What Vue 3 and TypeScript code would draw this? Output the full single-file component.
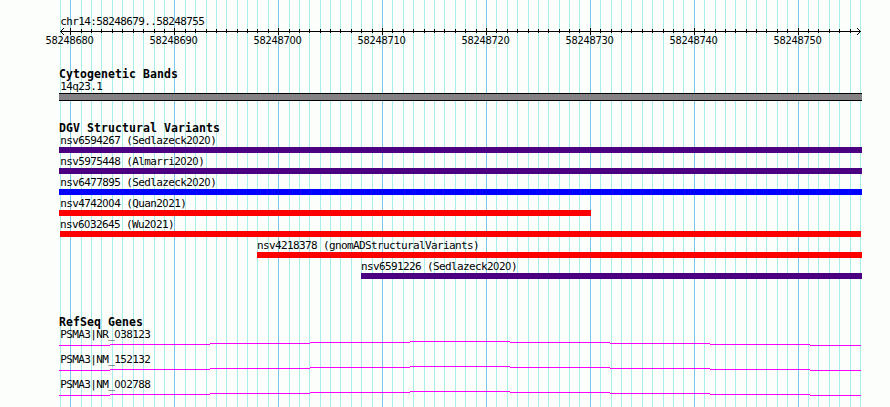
<script setup lang="ts">
import { computed, defineComponent, h } from 'vue'

interface Variant {
  name: string
  source: string
  start: number
  end: number
  kind: 'inversion' | 'complex' | 'loss'
}

const LEFT = 59

const PlainText = defineComponent({
  props: { text: { type: String, required: true } },
  setup(props) {
    return () =>
      h(
        'span',
        props.text
          .split(/(0+)/)
          .filter((p) => p)
          .map((p) => (p[0] === '0' ? h('span', { class: 'zero' }, p) : p)),
      )
  },
})

const decades: { x: number; minor: number[] }[] = [
  { x: 70, minor: [11, 21, 31, 42, 52, 63, 73, 84, 94] },
  { x: 174, minor: [11, 21, 32, 42, 52, 63, 73, 83, 94] },
  { x: 278, minor: [11, 21, 31, 42, 52, 62, 73, 83, 94] },
  { x: 382, minor: [10, 21, 31, 42, 52, 62, 73, 83, 94] },
  { x: 486, minor: [10, 21, 31, 42, 52, 62, 73, 83, 93] },
  { x: 590, minor: [10, 21, 31, 41, 52, 62, 73, 83, 93] },
  { x: 694, minor: [10, 21, 31, 41, 52, 62, 72, 83, 93] },
  { x: 798, minor: [10, 20, 31, 41, 52, 62] },
]

const majors = decades.map((d) => d.x)
const minors = computed(() => [60, ...decades.flatMap((d) => d.minor.map((m) => d.x + m))])
const ticks = computed(() => minors.value.filter((x) => x > 60 && x < 860))
const labels = decades.map((_, i) => String(58248680 + i * 10))

const variants: Variant[] = [
  { name: 'nsv6594267', source: 'Sedlazeck2020', start: 59, end: 862, kind: 'inversion' },
  { name: 'nsv5975448', source: 'Almarri2020', start: 59, end: 862, kind: 'inversion' },
  { name: 'nsv6477895', source: 'Sedlazeck2020', start: 59, end: 862, kind: 'complex' },
  { name: 'nsv4742004', source: 'Quan2021', start: 59, end: 591, kind: 'loss' },
  { name: 'nsv6032645', source: 'Wu2021', start: 60, end: 861, kind: 'loss' },
  { name: 'nsv4218378', source: 'gnomADStructuralVariants', start: 257, end: 862, kind: 'loss' },
  { name: 'nsv6591226', source: 'Sedlazeck2020', start: 361, end: 862, kind: 'inversion' },
]

const genes = ['PSMA3|NR_038123', 'PSMA3|NM_152132', 'PSMA3|NM_002788']

const intron = [
  [59, 110, 4],
  [110, 210, 3],
  [210, 310, 2],
  [310, 410, 1],
  [410, 510, 0],
  [510, 610, 1],
  [610, 710, 2],
  [710, 810, 3],
  [810, 861, 4],
]
</script>

<template>
  <main class="browser">
    <svg class="grid" width="890" height="407" shape-rendering="crispEdges" aria-hidden="true">
      <rect v-for="x in minors" :key="x" class="minor" :x="x" y="0" width="1" height="407" />
      <rect v-for="x in majors" :key="x" class="major" :x="x" y="0" width="1" height="407" />
    </svg>

    <header class="scale">
      <div class="caption region"><PlainText text="chr14:58248679..58248755" /></div>
      <svg class="ruler" width="890" height="7" shape-rendering="crispEdges">
        <rect x="60" y="3" width="801" height="1" />
        <rect v-for="x in ticks" :key="x" :x="x" y="1" width="1" height="4" />
        <rect v-for="x in majors" :key="x" :x="x" y="0" width="1" height="7" />
        <path d="M61 2h1v3h-1zM62 1h1v1h-1zM62 5h1v1h-1zM63 0h1v1h-1zM63 6h1v1h-1z" />
        <path d="M859 2h1v3h-1zM858 1h1v1h-1zM858 5h1v1h-1zM857 0h1v1h-1zM857 6h1v1h-1z" />
      </svg>
      <div class="coordinates">
        <span v-for="label in labels" :key="label" class="coordinate"><PlainText :text="label" /></span>
      </div>
    </header>

    <section class="track">
      <h2>Cytogenetic Bands</h2>
      <div class="caption"><PlainText text="14q23.1" /></div>
      <div class="band"></div>
    </section>

    <section class="track">
      <h2>DGV Structural Variants</h2>
      <div class="variants">
        <div
          v-for="v in variants"
          :key="v.name"
          class="variant"
          :style="{ marginLeft: v.start - LEFT + 'px', width: v.end - v.start + 'px' }"
        >
          <div class="caption" :class="{ flush: v.start > 59 }">
            <PlainText :text="`${v.name} (${v.source})`" />
          </div>
          <div class="bar" :class="v.kind"></div>
        </div>
      </div>
    </section>

    <section class="track genes-track">
      <h2>RefSeq Genes</h2>
      <div class="genes">
        <div v-for="g in genes" :key="g">
          <div class="caption"><PlainText :text="g" /></div>
          <svg class="intron" width="803" height="5" viewBox="59 0 803 5" shape-rendering="crispEdges">
            <rect v-for="s in intron" :key="s[0]" :x="s[0]" :y="s[2]" :width="s[1] - s[0]" height="1" />
          </svg>
        </div>
      </div>
    </section>
  </main>
</template>

<style>
body {
  margin: 0;
  background: #fcfefc;
}
</style>

<style scoped>
.browser {
  position: relative;
  width: 890px;
  height: 407px;
  box-sizing: border-box;
  padding-top: 15px;
  overflow: hidden;
  color: #000;
  background: #fcfefc;
  font: 11px/13px 'DejaVu Sans Mono', monospace;
  letter-spacing: -0.622px;
}
.grid {
  position: absolute;
  inset: 0;
}
.minor {
  fill: #a8ecec;
}
.major {
  fill: #7cc8ec;
}
.scale,
.track {
  position: relative;
}
.caption {
  height: 13px;
  padding-left: 1.3px;
  white-space: pre;
}
.caption.flush {
  padding-left: 0;
}
.region {
  margin-left: 59px;
}
.caption :deep(.zero),
.coordinate {
  font-family: 'DejaVu Sans Condensed', 'DejaVu Sans', sans-serif;
  font-stretch: condensed;
  letter-spacing: -0.298px;
}
.ruler {
  display: block;
}
.coordinates {
  display: flex;
  height: 13px;
  margin: -1px 0 0 17.5px;
}
.coordinate {
  width: 104px;
  text-align: center;
}
.track {
  width: 803px;
  margin: 21px 0 0 59px;
}
.genes-track {
  margin-top: 37px;
}
h2 {
  height: 12px;
  margin: 0;
  font-size: 11.5px;
  line-height: 13px;
  font-weight: 700;
  letter-spacing: 0.077px;
}
.band {
  height: 6px;
  border: solid #000;
  border-width: 1px 0;
  background: #848284;
}
.variants {
  display: flex;
  flex-direction: column;
  gap: 2px;
}
.bar {
  height: 6px;
}
.inversion {
  background: #4b0082;
}
.complex {
  background: #0000ff;
}
.loss {
  background: #ff0000;
}
.genes {
  display: flex;
  flex-direction: column;
  gap: 7px;
}
.intron {
  display: block;
  fill: #ff00ff;
}
</style>
